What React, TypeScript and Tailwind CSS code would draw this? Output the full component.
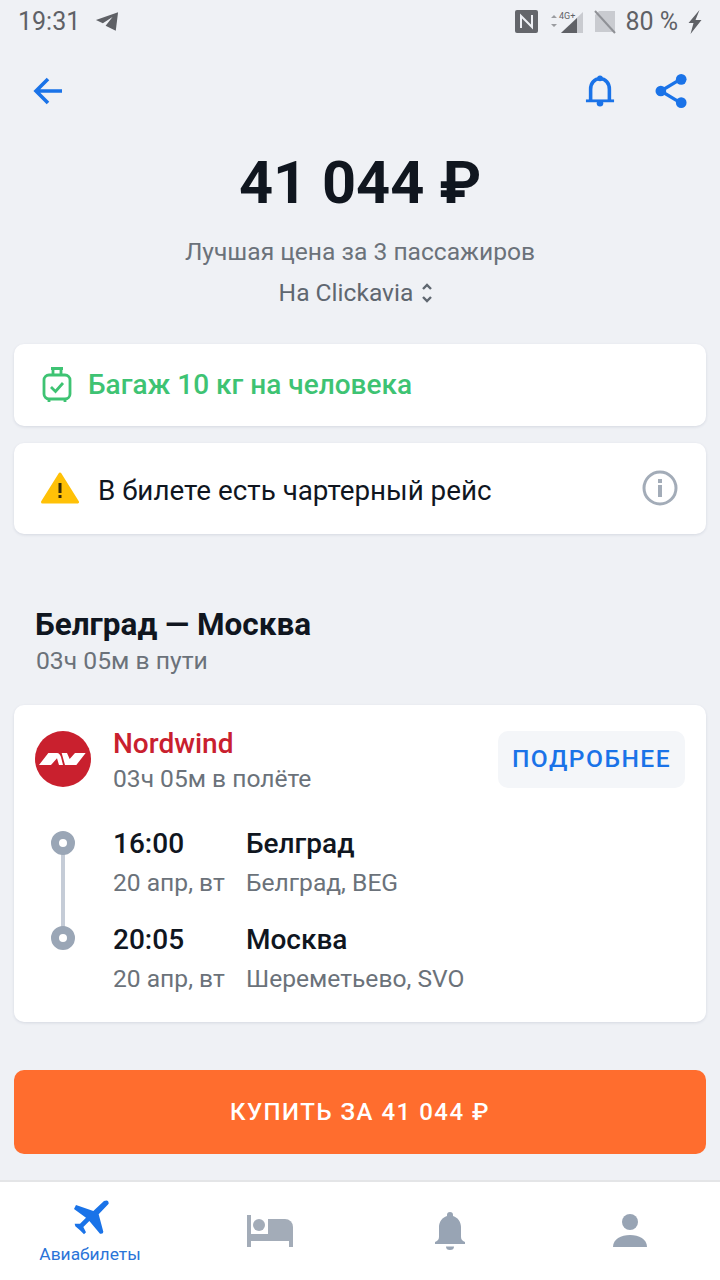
import { ReactNode } from 'react';

const BLUE = '#1a73e8';

const StatusBar = () => (
  <div className="flex h-[44px] items-center justify-between pl-[18px] pr-[18px] text-[25px] leading-none text-[#5f6166]">
    <div className="flex items-center gap-[15px]">
      <span>19:31</span>
      <svg width="24" height="21" viewBox="0 0 26 22">
        <path d="M25 1 L1 9.500 L8.500 13 L19 6 L11.500 15.500 L22.500 21 Z" fill="#5f6166" />
      </svg>
    </div>
    <div className="flex items-center">
      <svg width="23" height="23" viewBox="0 0 23 23" className="mr-[10px]">
        <rect width="23" height="23" rx="2" fill="#64666b" />
        <path d="M6 18V6l11 11V5" fill="none" stroke="#eef0f5" strokeWidth="2" />
      </svg>
      <svg width="36" height="24" viewBox="0 0 36 24" className="mr-[10px]">
        <path d="M3 8l3-3 3 3zM3 14l3 3 3-3z" fill="#9a9ca0" />
        <path d="M13 23L35 2v21z" fill="#c9cbd0" />
        <path d="M13 23L29 8v15z" fill="#5f6166" />
        <text x="11" y="9" fontSize="9" fill="#5f6166" fontFamily="Roboto">4G+</text>
      </svg>
      <svg width="22" height="24" viewBox="0 0 22 24" className="mr-[9px]">
        <path d="M5 1h16v21H1V5z" fill="#c9cbd0" />
        <path d="M1 1l20 22" stroke="#8f9196" strokeWidth="2" />
      </svg>
      <span className="mr-[10px]">80 %</span>
      <svg width="14" height="24" viewBox="2 0 13 24">
        <path d="M13 0L2 13h5L4 24l11-14H9z" fill="#5f6166" />
      </svg>
    </div>
  </div>
);

const Header = () => (
  <div className="mt-[22px] flex h-[50px] items-center justify-between pl-[32px] pr-[32px]">
    <svg width="31" height="32" viewBox="0 0 31 32" fill="none" stroke={BLUE} strokeWidth="3.600">
      <path d="M30 16H4M16 4L4 16l12 12" />
    </svg>
    <div className="flex items-center gap-[40px]">
      <svg width="30" height="34" viewBox="0 0 32 34" fill="none">
        <path d="M6 27V15C6 8.500 10 4 16 4s10 4.500 10 11v12" stroke={BLUE} strokeWidth="3.800" />
        <path d="M1 27.500h30" stroke={BLUE} strokeWidth="3" />
        <circle cx="16" cy="3.500" r="3" fill={BLUE} />
        <circle cx="16" cy="30" r="3.500" fill={BLUE} />
      </svg>
      <svg width="33" height="36" viewBox="0 0 34 36" fill={BLUE}>
        <path d="M26 6L6 18l20 12" fill="none" stroke={BLUE} strokeWidth="3.400" />
        <circle cx="27" cy="6" r="5.500" />
        <circle cx="6" cy="18" r="5.500" />
        <circle cx="27" cy="30" r="5.500" />
      </svg>
    </div>
  </div>
);

const Card = ({ className, children }: { className: string; children: ReactNode }) => (
  <div className={`mx-[14px] rounded-[10px] bg-white shadow-[0_1px_3px_rgba(30,50,90,0.12)] ${className}`}>
    {children}
  </div>
);

const Stop = ({ time, date, city, airport }: { time: string; date: string; city: string; airport: string }) => (
  <div className="flex h-[96px]">
    <div className="w-[99px]" />
    <div className="w-[133px]">
      <div className="text-[28px] font-medium leading-[36px] text-[#10161f]">{time}</div>
      <div className="mt-[3px] text-[24.600px] leading-[36px] text-[#6b727a]">{date}</div>
    </div>
    <div>
      <div className="text-[28px] font-medium leading-[36px] text-[#10161f]">{city}</div>
      <div className="mt-[3px] text-[24.600px] leading-[36px] text-[#6b727a]">{airport}</div>
    </div>
  </div>
);

const Tab = ({ children, label }: { children: ReactNode; label?: string }) => (
  <div className={`flex w-[180px] flex-col items-center ${label ? 'pt-[12px]' : 'pt-[27px]'}`}>
    <div className="flex h-[44px] items-center justify-center">{children}</div>
    {label ? <div className="mt-[4px] text-[17.400px] leading-[24px] text-[#2a74d8]">{label}</div> : null}
  </div>
);

export default function App() {
  return (
    <div className="flex h-[1280px] w-[720px] flex-col overflow-hidden bg-[#eff1f5] font-['Roboto',sans-serif]">
      <StatusBar />
      <Header />

      <div className="mt-[34px] text-center text-[59.500px] font-bold leading-[66px] text-[#10161f]">41 044 ₽</div>
      <div className="mt-[18px] text-center text-[24.600px] leading-[36px] text-[#6b727a]">
        Лучшая цена за 3 пассажиров
      </div>
      <div className="mt-[5px] flex items-center justify-center gap-[8px] pr-[8px] text-[24.600px] leading-[36px] text-[#5f6770]">
        <span>На Clickavia</span>
        <svg width="12" height="24" viewBox="0 0 12 24" fill="none" stroke="#5f6770" strokeWidth="2.400">
          <path d="M2 8l4-4 4 4M2 16l4 4 4-4" />
        </svg>
      </div>

      <Card className="mt-[33px] flex h-[82px] items-center pl-[28px]">
        <svg width="30" height="36" viewBox="0 0 30 36" fill="none" stroke="#3ec373" strokeWidth="2.800">
          <rect x="2" y="8" width="26" height="24" rx="5" />
          <path d="M9 1.500h12M11 2v6M19 2v6M7 32v3M23 32v3" />
          <path d="M9 20l4.500 4.500L21 16" />
        </svg>
        <div className="ml-[16px] text-[28px] font-medium text-[#3ec373]">Багаж 10 кг на человека</div>
      </Card>

      <Card className="mt-[17px] flex h-[91px] items-center pl-[27px] pr-[28px]">
        <svg width="38" height="32" viewBox="0 0 38 32">
          <path d="M19 2L36.500 30H1.500z" fill="#ffc107" stroke="#ffc107" strokeWidth="3" strokeLinejoin="round" />
          <rect x="17.500" y="11" width="3" height="10" fill="#33290a" />
          <rect x="17.500" y="23" width="3" height="3" fill="#33290a" />
        </svg>
        <div className="ml-[19px] mt-[5px] flex-1 text-[27.800px] text-[#10161f]">В билете есть чартерный рейс</div>
        <svg width="36" height="36" viewBox="0 0 36 36" fill="none">
          <circle cx="18" cy="18" r="16" stroke="#a3acb8" strokeWidth="3" />
          <rect x="16" y="15" width="4" height="12" fill="#a3acb8" />
          <rect x="16" y="9" width="4" height="4" fill="#a3acb8" />
        </svg>
      </Card>

      <div className="mt-[71px] pl-[35px] text-[31.500px] font-bold leading-[40px] text-[#10161f]">Белград — Москва</div>
      <div className="pl-[36px] text-[24.700px] leading-[32px] text-[#6b727a]">03ч 05м в пути</div>

      <Card className="relative mt-[28px] h-[318px] pt-[26px]">
        <div className="flex h-[61px] items-start pl-[21px] pr-[21px]">
          <svg width="56" height="56" viewBox="18 18 168 168">
            <circle cx="102" cy="102" r="84" fill="#c9202e" />
            <path d="M30 120L58 84H84C90 84 94 90 96 96L102 120H90L84 100L66 120Z M108 120L98 84H114L122 102L138 84H170L142 120Z" fill="#fff" />
          </svg>
          <div className="ml-[22px] mt-[-5px] flex-1">
            <div className="text-[28px] font-medium leading-[36px] text-[#c9202e]">Nordwind</div>
            <div className="mt-[-1px] text-[24.600px] leading-[36px] text-[#6b727a]">03ч 05м в полёте</div>
          </div>
          <div className="flex h-[57px] w-[187px] items-center justify-center rounded-[10px] bg-[#f4f6f9] text-[24.600px] font-medium tracking-[1.500px] text-[#1a73e8]">
            ПОДРОБНЕЕ
          </div>
        </div>
        <div className="mt-[34px]">
          <Stop time="16:00" date="20 апр, вт" city="Белград" airport="Белград, BEG" />
          <Stop time="20:05" date="20 апр, вт" city="Москва" airport="Шереметьево, SVO" />
        </div>
        <svg width="26" height="122" viewBox="0 0 26 122" className="absolute left-[36px] top-[125px]">
          <rect x="11" y="10" width="4" height="100" fill="#c5ccd7" />
          <circle cx="13" cy="13" r="8" fill="#fff" stroke="#9aa6b6" strokeWidth="8" />
          <circle cx="13" cy="108" r="8" fill="#fff" stroke="#9aa6b6" strokeWidth="8" />
        </svg>
      </Card>

      <div className="mx-[14px] mt-[48px] flex h-[84px] items-center justify-center rounded-[10px] bg-[#ff6d2e] text-[24px] font-medium tracking-[1.500px] text-white">
        КУПИТЬ ЗА 41 044 ₽
      </div>

      <div className="mt-[26px] flex h-[100px] border-t-2 border-[#e4e5e7] bg-white">
        <Tab label="Авиабилеты">
          <svg width="60" height="50" viewBox="0 0 180 150" fill="#1a73e8">
            <path d="M132 30Q146 24 146 38L116 70L130 122Q130 130 120 128L88 90L70 108L78 124L72 130L60 118L46 106L44 98L60 98L78 80L42 54L48 42L100 60Z" />
          </svg>
        </Tab>
        <Tab>
          <svg width="46" height="32" viewBox="0 0 46 32" fill="#a3acb8">
            <rect x="0" y="0" width="4" height="32" />
            <rect x="42" y="22" width="4" height="10" />
            <rect x="0" y="19" width="46" height="7" />
            <circle cx="12" cy="10" r="6" />
            <path d="M21 4h17a8 8 0 0 1 8 8v8H21z" />
          </svg>
        </Tab>
        <Tab>
          <svg width="32" height="38" viewBox="0 0 32 38" fill="#98a4b4">
            <path d="M16 0a3 3 0 0 1 3 3v1c5 1.500 8 6 8 11v10c0 3 2 4 4 5v2H1v-2c2-1 4-2 4-5V15c0-5 3-9.500 8-11V3a3 3 0 0 1 3-3z" />
            <path d="M12 34.500h8a4 3.500 0 0 1-8 0z" />
          </svg>
        </Tab>
        <Tab>
          <svg width="34" height="34" viewBox="0 0 34 34" fill="#98a4b4">
            <circle cx="17" cy="8" r="8" />
            <path d="M0 33c0-8 8-12 17-12s17 4 17 12z" />
          </svg>
        </Tab>
      </div>
    </div>
  );
}
